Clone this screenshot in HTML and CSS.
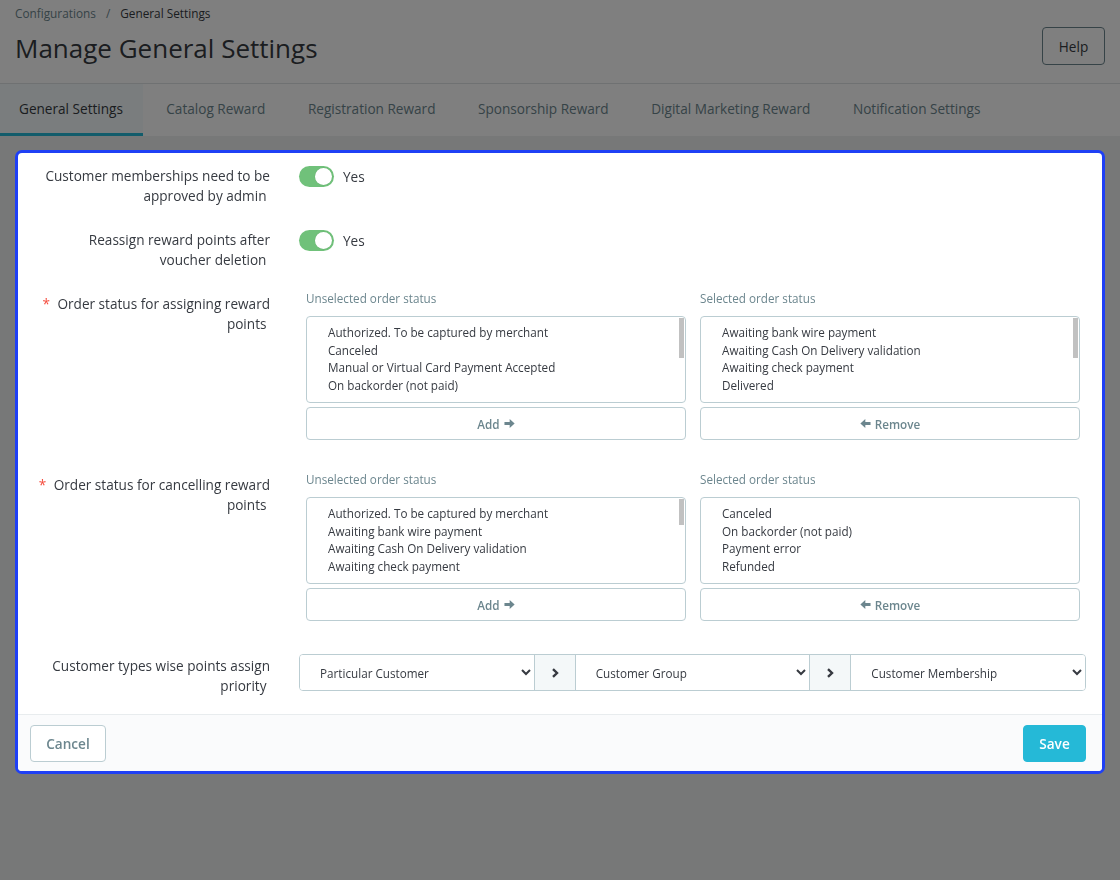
FILE: index.html
```html
<!DOCTYPE html>
<html lang="en">
<head>
<meta charset="utf-8">
<title>Manage General Settings</title>
<link rel="stylesheet" href="styles.css">
</head>
<body>
<div class="page">
  <header class="page-head">
    <div class="head-main">
      <nav class="breadcrumb">
        <span class="crumb">Configurations</span><span class="sep">/</span><span class="crumb-current">General Settings</span>
      </nav>
      <h1 class="title">Manage General Settings</h1>
    </div>
    <button class="help-btn" type="button">Help</button>
  </header>

  <nav class="tabs">
    <a class="tab active">General Settings</a>
    <a class="tab">Catalog Reward</a>
    <a class="tab">Registration Reward</a>
    <a class="tab">Sponsorship Reward</a>
    <a class="tab">Digital Marketing Reward</a>
    <a class="tab">Notification Settings</a>
  </nav>

  <main class="content">
    <div class="overlay"></div>
    <form class="card">
      <div class="card-body">
        <div class="form-group">
          <label class="label">Customer memberships need to be approved by admin&nbsp;</label>
          <div class="control control-toggle">
            <span class="switch"><span class="knob"></span></span>
            <span class="switch-text">Yes</span>
          </div>
        </div>

        <div class="form-group">
          <label class="label">Reassign reward points after voucher deletion&nbsp;</label>
          <div class="control control-toggle">
            <span class="switch"><span class="knob"></span></span>
            <span class="switch-text">Yes</span>
          </div>
        </div>

        <div class="form-group">
          <label class="label"><span class="req">*</span> Order status for assigning reward points&nbsp;</label>
          <div class="control">
            <div class="swap">
              <div class="swap-col">
                <div class="swap-title">Unselected order status</div>
                <div class="listbox">
                  <div class="list-items">
                    <div class="opt">Authorized. To be captured by merchant</div>
                    <div class="opt">Canceled</div>
                    <div class="opt">Manual or Virtual Card Payment Accepted</div>
                    <div class="opt">On backorder (not paid)</div>
                  </div>
                  <span class="thumb thumb-long"></span>
                </div>
                <button class="swap-btn" type="button"><span>Add</span><svg class="ico" viewBox="0 0 12 12"><path d="M0.5 4.3h5.7V1l5.4 5-5.4 5V7.7H0.5z"/></svg></button>
              </div>
              <div class="swap-col">
                <div class="swap-title">Selected order status</div>
                <div class="listbox">
                  <div class="list-items">
                    <div class="opt">Awaiting bank wire payment</div>
                    <div class="opt">Awaiting Cash On Delivery validation</div>
                    <div class="opt">Awaiting check payment</div>
                    <div class="opt">Delivered</div>
                  </div>
                  <span class="thumb thumb-long"></span>
                </div>
                <button class="swap-btn" type="button"><svg class="ico" viewBox="0 0 12 12"><path d="M11.5 4.3H5.8V1L0.4 6l5.4 5V7.7h5.7z"/></svg><span>Remove</span></button>
              </div>
            </div>
          </div>
        </div>

        <div class="form-group">
          <label class="label"><span class="req">*</span> Order status for cancelling reward points&nbsp;</label>
          <div class="control">
            <div class="swap">
              <div class="swap-col">
                <div class="swap-title">Unselected order status</div>
                <div class="listbox">
                  <div class="list-items">
                    <div class="opt">Authorized. To be captured by merchant</div>
                    <div class="opt">Awaiting bank wire payment</div>
                    <div class="opt">Awaiting Cash On Delivery validation</div>
                    <div class="opt">Awaiting check payment</div>
                  </div>
                  <span class="thumb thumb-short"></span>
                </div>
                <button class="swap-btn" type="button"><span>Add</span><svg class="ico" viewBox="0 0 12 12"><path d="M0.5 4.3h5.7V1l5.4 5-5.4 5V7.7H0.5z"/></svg></button>
              </div>
              <div class="swap-col">
                <div class="swap-title">Selected order status</div>
                <div class="listbox">
                  <div class="list-items">
                    <div class="opt">Canceled</div>
                    <div class="opt">On backorder (not paid)</div>
                    <div class="opt">Payment error</div>
                    <div class="opt">Refunded</div>
                  </div>
                </div>
                <button class="swap-btn" type="button"><svg class="ico" viewBox="0 0 12 12"><path d="M11.5 4.3H5.8V1L0.4 6l5.4 5V7.7h5.7z"/></svg><span>Remove</span></button>
              </div>
            </div>
          </div>
        </div>

        <div class="form-group form-group-last">
          <label class="label">Customer types wise points assign priority&nbsp;</label>
          <div class="control control-select">
            <div class="select-group">
              <select class="sel"><option>Particular Customer</option></select>
              <span class="addon"><svg class="chev" viewBox="0 0 10 12"><path d="M3 2.2l4 3.8-4 3.8" /></svg></span>
              <select class="sel"><option>Customer Group</option></select>
              <span class="addon"><svg class="chev" viewBox="0 0 10 12"><path d="M3 2.2l4 3.8-4 3.8" /></svg></span>
              <select class="sel"><option>Customer Membership</option></select>
            </div>
          </div>
        </div>
      </div>
      <div class="card-footer">
        <button class="btn btn-cancel" type="button">Cancel</button>
        <button class="btn btn-save" type="button">Save</button>
      </div>
    </form>
  </main>
</div>
</body>
</html>
```

FILE: styles.css
```css
* { box-sizing: border-box; }

html, body {
  margin: 0;
  padding: 0;
}

body {
  font-family: "Open Sans", "Noto Sans", sans-serif;
  color: #363a41;
  background: #eff1f1;
  min-height: 880px;
}

.page {
  min-height: 880px;
}

.page-head {
  display: flex;
  justify-content: space-between;
  align-items: flex-end;
  background: #fff;
  padding: 4px 15px 18px 15px;
  border-bottom: 1px solid #dfe3e4;
  height: 84px;
}

.breadcrumb {
  font-size: 11.8px;
  line-height: 18px;
  margin-bottom: 9px;
}

.crumb { color: #6c868e; }
.sep { color: #6c868e; margin: 0 10px; }
.crumb-current { color: #363a41; }

.title {
  margin: 0;
  font-size: 26px;
  font-weight: 400;
  line-height: 34px;
  color: #363a41;
}

.help-btn {
  font-family: inherit;
  font-size: 13.6px;
  color: #363a41;
  background: #fff;
  border: 1px solid #6c868e;
  border-radius: 4px;
  height: 38px;
  width: 63px;
  padding: 0;
}

.tabs {
  display: flex;
  background: #fff;
  height: 52px;
}

.tab {
  display: block;
  font-size: 13.6px;
  line-height: 49px;
  padding: 0 21.3px;
  color: #6c868e;
  border-bottom: 3px solid transparent;
}

.tab:first-child {
  padding: 0 20px 0 19px;
  margin-right: 2px;
}

.tab.active {
  color: #363a41;
  background: #f4fbfd;
  border-bottom-color: #25b9d7;
}

.content {
  padding: 14px 15px 0;
}

.overlay {
  position: fixed;
  inset: 0;
  background: rgba(0, 0, 0, 0.5);
  z-index: 1;
}

.card {
  position: relative;
  z-index: 2;
  background: #fff;
  border: 3px solid #1f40f5;
  border-radius: 7px;
  overflow: hidden;
}

.card-body {
  padding: 8px 0 0;
}

.form-group {
  display: grid;
  grid-template-columns: 266px 1fr;
  margin-bottom: 20px;
}

.form-group-last {
  margin-bottom: 19px;
}

.label {
  font-size: 13.6px;
  line-height: 19.5px;
  text-align: right;
  padding: 5px 14px 0 16px;
  color: #363a41;
}

.req {
  color: #f54c3e;
  margin-right: 4px;
}

.control {
  padding: 0 16px 0 15px;
}

.control-toggle {
  display: flex;
  align-items: flex-start;
  gap: 9px;
  padding-top: 5px;
}

.switch {
  display: flex;
  justify-content: flex-end;
  align-items: center;
  width: 35px;
  height: 21px;
  border-radius: 11px;
  background: #70c17a;
  padding: 0 2px;
}

.knob {
  width: 17px;
  height: 17px;
  border-radius: 50%;
  background: #fff;
  box-shadow: 0 0 0 0.5px rgba(0, 0, 0, 0.08);
}

.switch-text {
  font-size: 13.6px;
  line-height: 21px;
  color: #363a41;
}

.swap {
  display: grid;
  grid-template-columns: 1fr 1fr;
  column-gap: 14px;
  margin: 0 6px 10px 7px;
}

.swap-title {
  font-size: 11.7px;
  line-height: 18px;
  color: #6c868e;
  margin-bottom: 9px;
}

.listbox {
  position: relative;
  height: 87px;
  border: 1px solid #bbcdd2;
  border-radius: 4px;
  padding: 7px 0 0 21px;
}

.list-items {
  height: 71px;
  overflow: hidden;
}

.thumb {
  position: absolute;
  right: 1px;
  top: 1px;
  width: 5px;
  background: #c1c1c1;
}

.thumb-long { height: 40px; }
.thumb-short { height: 26px; }

.opt {
  font-size: 11.7px;
  line-height: 17.7px;
  color: #363a41;
  white-space: nowrap;
}

.swap-btn {
  display: flex;
  justify-content: center;
  align-items: center;
  gap: 4px;
  width: 100%;
  height: 33px;
  margin-top: 4px;
  background: #fff;
  border: 1px solid #bbcdd2;
  border-radius: 4px;
  font-family: inherit;
  font-size: 11.7px;
  font-weight: 600;
  color: #6c868e;
}

.ico {
  width: 11px;
  height: 11px;
  fill: #6c868e;
  flex: none;
}

.control-select {
  padding-top: 3px;
}

.select-group {
  display: flex;
  height: 37px;
  border: 1px solid #bbcdd2;
  border-radius: 4px;
  overflow: hidden;
}

.sel {
  flex: 1;
  min-width: 0;
  border: none;
  background: #fff;
  font-family: inherit;
  font-size: 11.7px;
  color: #363a41;
  padding: 0 4px 0 16px;
  outline: none;
}

.addon {
  width: 42px;
  flex: none;
  display: flex;
  align-items: center;
  justify-content: center;
  background: #f4f8f9;
  border-left: 1px solid #bbcdd2;
  border-right: 1px solid #bbcdd2;
}

.chev {
  width: 10px;
  height: 12px;
  fill: none;
  stroke: #363a41;
  stroke-width: 2.4;
}

.card-footer {
  display: flex;
  justify-content: space-between;
  align-items: center;
  background: #fafbfc;
  border-top: 1px solid #e8ecee;
  padding: 10px 16px 9px 12px;
}

.btn {
  height: 37px;
  border-radius: 4px;
  font-family: inherit;
  font-size: 13.6px;
  font-weight: 600;
}

.btn-cancel {
  background: #fff;
  border: 1px solid #bbcdd2;
  color: #6c868e;
  width: 76px;
  padding: 0;
}

.btn-save {
  background: #25b9d7;
  border: 1px solid #25b9d7;
  color: #fff;
  width: 63px;
  padding: 0;
}
```
